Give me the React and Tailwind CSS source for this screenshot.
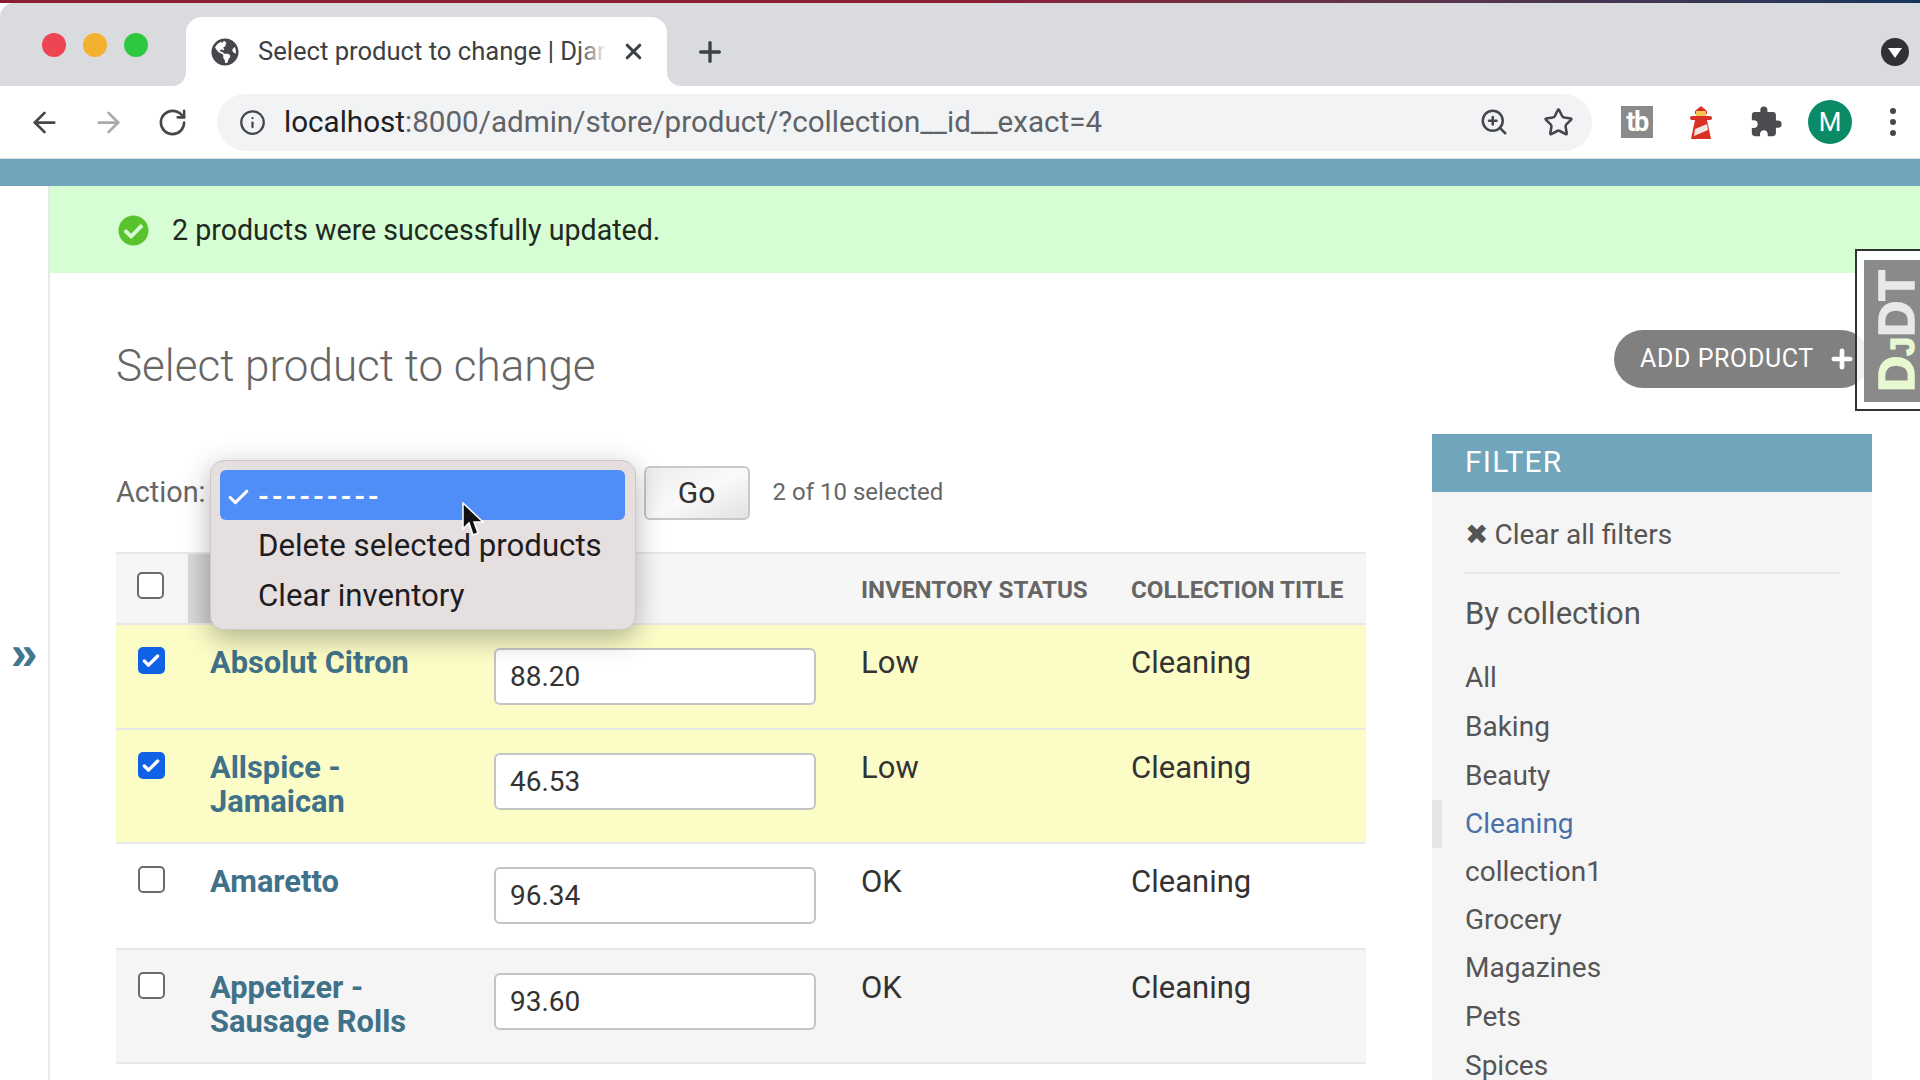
import React from 'react';
import { ArrowLeft, ArrowRight, RotateCw, Info, ZoomIn, Star, X, Plus, Check } from 'lucide-react';
import { FaGlobeAmericas, FaCheckCircle } from 'react-icons/fa';
import { MdExtension } from 'react-icons/md';

const rows = [
    { name: ['Absolut Citron'], price: '88.20', status: 'Low', checked: true, bg: 'bg-[#fbfcc6]', h: 'h-[105px]' },
    { name: ['Allspice -', 'Jamaican'], price: '46.53', status: 'Low', checked: true, bg: 'bg-[#fbfcc6]', h: 'h-[114px]' },
    { name: ['Amaretto'], price: '96.34', status: 'OK', checked: false, bg: 'bg-white', h: 'h-[106px]' },
    { name: ['Appetizer -', 'Sausage Rolls'], price: '93.60', status: 'OK', checked: false, bg: 'bg-[#f5f5f5]', h: 'h-[114px]' },
];

const filters = [
    ['All', 'h-[49px]'],
    ['Baking', 'h-[49px]'],
    ['Beauty', 'h-[49px]'],
    ['Cleaning', 'h-[48px]'],
    ['collection1', 'h-[48px]'],
    ['Grocery', 'h-[48px]'],
    ['Magazines', 'h-[48px]'],
    ['Pets', 'h-[49px]'],
    ['Spices', 'h-[49px]'],
];

const Checkbox = ({ checked }) => (
    checked ? (
        <div className="w-[27px] h-[27px] rounded-[5px] bg-[#0f62e6] flex items-center justify-center">
            <Check size={20} strokeWidth={4} className="text-white" />
        </div>
    ) : (
        <div className="w-[27px] h-[27px] rounded-[5px] border-2 border-[#6b6b6b] bg-white" />
    )
);

const Lighthouse = () => (
    <svg width="24" height="33" viewBox="0 0 24 33">
        <path d="M12 0 L18 5 L18 8 L6 8 L6 5 Z" fill="#d93025" />
        <rect x="7" y="5" width="10" height="6" fill="#f6c453" />
        <rect x="1" y="10" width="22" height="4" rx="2" fill="#d93025" />
        <path d="M6 14 H18 L22 33 H2 Z" fill="#d93025" />
        <path d="M6 23 L18 18 L19 24 L5 30 Z" fill="#f3e6e0" />
    </svg>
);

const Cursor = () => (
    <svg width="24" height="36" viewBox="0 0 24 36">
        <path d="M2 1 L2 27 L8 21 L12 33 L17 31 L13 20 L22 20 Z" fill="#111" stroke="#fff" strokeWidth="1.5" />
    </svg>
);

const App = () => {
    return (
        <div className="relative w-[1920px] h-[1080px] overflow-hidden bg-white font-['Roboto',sans-serif] text-[#333]">
            {/* window edge */}
            <div className="h-[3px] bg-gradient-to-r from-[#8c1d35] via-[#8c1d35] to-[#14365c]" />

            {/* tab strip */}
            <div className="flex h-[83px] items-end bg-[#d9dbdf] rounded-tl-[14px]">
                <div className="flex h-[83px] w-[186px] shrink-0 items-center gap-[17px] pl-[42px]">
                    <div className="w-[24px] h-[24px] rounded-full bg-[#ee4553]" />
                    <div className="w-[24px] h-[24px] rounded-full bg-[#f4b02f]" />
                    <div className="w-[24px] h-[24px] rounded-full bg-[#2dc83f]" />
                </div>
                <div className="relative flex h-[69px] w-[481px] shrink-0 items-center rounded-t-[16px] bg-white pl-[25px]">
                    {/* flared tab corners */}
                    <div className="absolute bottom-0 left-[-14px] h-[14px] w-[14px] bg-white">
                        <div className="h-full w-full rounded-br-[14px] bg-[#d9dbdf]" />
                    </div>
                    <div className="absolute bottom-0 right-[-14px] h-[14px] w-[14px] bg-white">
                        <div className="h-full w-full rounded-bl-[14px] bg-[#d9dbdf]" />
                    </div>
                    <FaGlobeAmericas size={28} className="shrink-0 text-[#45474b]" />
                    <div className="relative ml-[19px] w-[349px] overflow-hidden whitespace-nowrap text-[25.6px] text-[#3c4043]">
                        Select product to change | Django site admin
                        <div className="absolute inset-y-0 right-0 w-[30px] bg-gradient-to-r from-transparent to-white" />
                    </div>
                    <X size={25} strokeWidth={3} className="ml-[14px] shrink-0 text-[#3c4043]" />
                </div>
                <div className="flex h-[69px] flex-1 items-center pl-[27px] pr-[11px]">
                    <Plus size={32} strokeWidth={2.5} className="text-[#3c4043]" />
                    <div className="ml-auto flex h-[28px] w-[28px] items-center justify-center rounded-full bg-[#2f3136]">
                        <div className="mt-[3px] h-0 w-0 border-x-[7px] border-t-[10px] border-x-transparent border-t-white" />
                    </div>
                </div>
            </div>

            {/* toolbar */}
            <div className="flex h-[73px] items-center border-b border-[#e3e3e3] bg-white pl-[28px]">
                <ArrowLeft size={33} strokeWidth={2} className="text-[#45474b]" />
                <ArrowRight size={33} strokeWidth={2} className="ml-[31px] text-[#a9abae]" />
                <RotateCw size={31} strokeWidth={2} className="ml-[32px] text-[#45474b]" />
                <div className="ml-[29px] flex h-[57px] w-[1375px] items-center rounded-full bg-[#f1f3f4] pl-[22px]">
                    <Info size={27} strokeWidth={2} className="text-[#45474b]" />
                    <div className="ml-[18px] whitespace-nowrap text-[29.6px] text-[#5f6368]">
                        <span className="text-[#202124]">localhost</span>:8000/admin/store/product/?collection__id__exact=4
                    </div>
                    <ZoomIn size={30} strokeWidth={2} className="ml-auto text-[#45474b]" />
                    <Star size={31} strokeWidth={2} className="ml-[34px] mr-[18px] text-[#45474b]" />
                </div>
                <div className="ml-[29px] flex h-[32px] w-[32px] items-center justify-center bg-[#8a8a8a] text-[27px] leading-none font-bold tracking-[-1.5px] text-white">
                    tb
                </div>
                <div className="ml-[36px] flex w-[24px] justify-center">
                    <Lighthouse />
                </div>
                <MdExtension size={34} className="ml-[36px] text-[#4a4c50]" />
                <div className="ml-[25px] flex h-[44px] w-[44px] items-center justify-center rounded-full bg-[#0b8a66] text-[26px] text-white">
                    M
                </div>
                <div className="ml-[38px] flex flex-col gap-[5px]">
                    <div className="h-[6px] w-[6px] rounded-full bg-[#45474b]" />
                    <div className="h-[6px] w-[6px] rounded-full bg-[#45474b]" />
                    <div className="h-[6px] w-[6px] rounded-full bg-[#45474b]" />
                </div>
            </div>

            {/* django header strip */}
            <div className="h-[27px] bg-[#70a5bb]" />

            <div className="flex">
                {/* collapsed nav */}
                <div className="flex h-[894px] w-[50px] shrink-0 justify-center border-r-2 border-[#e8e8e8] pt-[439px]">
                    <span className="font-['Liberation_Sans',sans-serif] text-[48px] leading-[56px] font-bold text-[#417690]">»</span>
                </div>

                <div className="min-w-0 flex-1">
                    {/* message */}
                    <div className="flex h-[87px] items-center bg-[#d6fdd3] pl-[68px] pt-[1px] text-[28.6px] text-[#1f2a1f]">
                        <FaCheckCircle size={31} className="text-[#58c32c]" />
                        <span className="ml-[23px]">2 products were successfully updated.</span>
                    </div>

                    {/* title row */}
                    <div className="flex h-[161px] items-start pl-[66px] pr-[50px] pt-[57px]">
                        <h1 className="mt-[7px] text-[44px] leading-[58px] font-light text-[#666]">Select product to change</h1>
                        <div className="ml-auto flex h-[58px] w-[256px] items-center rounded-full bg-[#808080] pl-[26px] text-[25px] tracking-[0.6px] text-white">
                            ADD PRODUCT
                            <Plus size={28} strokeWidth={4} className="ml-[14px]" />
                        </div>
                    </div>

                    <div className="flex items-start pl-[66px]">
                        {/* changelist */}
                        <div className="w-[1250px] shrink-0">
                            <div className="flex h-[118px] items-start pt-[32px]">
                                <span className="mt-[8px] text-[28.8px] leading-[36px] text-[#666]">Action:</span>
                                <div className="ml-[438px] flex h-[54px] w-[106px] items-center justify-center rounded-[6px] border-2 border-[#c8c8c8] bg-gradient-to-br from-[#ececec] via-[#fafafa] to-[#e2e2e2] pb-[2px] text-[30px] text-[#333]">
                                    Go
                                </div>
                                <span className="ml-[23px] mt-[10px] text-[24px] leading-[32px] text-[#666]">2 of 10 selected</span>
                            </div>

                            {/* table head */}
                            <div className="flex h-[73px] border-y-2 border-[#e8e8e8] bg-[#f6f6f6]">
                                <div className="w-[72px] shrink-0 pl-[21px] pt-[18px]">
                                    <Checkbox checked={false} />
                                </div>
                                <div className="w-[673px] shrink-0 bg-gradient-to-r from-[#dadada] to-[#c8c8c8] [background-size:40px_100%] bg-no-repeat" />
                                <div className="w-[270px] shrink-0 pt-[18px] text-[24.2px] font-bold text-[#666]">INVENTORY STATUS</div>
                                <div className="pt-[18px] text-[24.2px] font-bold text-[#666] whitespace-nowrap">COLLECTION TITLE</div>
                            </div>

                            {/* rows */}
                            {rows.map((row) => (
                                <div key={row.price} className={`flex border-b-2 border-[#e8e8e8] ${row.bg} ${row.h}`}>
                                    <div className="flex w-[70px] shrink-0 justify-center pt-[22px]">
                                        <Checkbox checked={row.checked} />
                                    </div>
                                    <div className="w-[308px] shrink-0 pl-[24px] pt-[21px] text-[30.8px] leading-[34px] font-bold text-[#3f7189]">
                                        {row.name.map((line) => (
                                            <div key={line}>{line}</div>
                                        ))}
                                    </div>
                                    <div className="w-[367px] shrink-0 pt-[23px]">
                                        <input
                                            readOnly
                                            value={row.price}
                                            className="h-[57px] w-[322px] rounded-[6px] border-2 border-[#c4c4c4] bg-white px-[14px] text-[28px] text-[#333] outline-none"
                                        />
                                    </div>
                                    <div className="w-[270px] shrink-0 pt-[21px] text-[31px] leading-[34px] text-[#333]">{row.status}</div>
                                    <div className="pt-[21px] text-[31px] leading-[34px] text-[#333]">Cleaning</div>
                                </div>
                            ))}
                        </div>

                        {/* filter */}
                        <div className="ml-[66px] w-[440px] shrink-0">
                            <div className="flex h-[58px] items-center bg-[#70a5bb] pb-[4px] pl-[33px] text-[30px] tracking-[1.2px] text-white">
                                FILTER
                            </div>
                            <div className="h-[600px] bg-[#f5f5f5]">
                                <div className="mx-[33px] flex h-[82px] items-center border-b-2 border-[#e8e8e8] pt-[6px] text-[28px] text-[#555]">
                                    <span className="mr-[6px] font-['DejaVu_Sans',sans-serif] text-[28px]">✖</span>
                                    Clear all filters
                                </div>
                                <div className="flex h-[79px] items-center pl-[33px] pt-[1px] text-[31px] text-[#555]">By collection</div>
                                {filters.map(([label, h]) => (
                                    <div
                                        key={label}
                                        className={`flex items-center text-[28px] ${h} ${
                                            label === 'Cleaning'
                                                ? 'border-l-[10px] border-[#e6e6e6] pl-[23px] text-[#4d6fa8]'
                                                : 'pl-[33px] text-[#555]'
                                        }`}
                                    >
                                        {label}
                                    </div>
                                ))}
                            </div>
                        </div>
                    </div>
                </div>
            </div>

            {/* native select popup */}
            <div className="absolute left-[210px] top-[460px] h-[170px] w-[426px] rounded-[14px] border border-[#cfc8c8] bg-[#e6dfdf] p-[9px] pr-[10px] shadow-[0_8px_28px_rgba(0,0,0,0.3)]">
                <div className="relative mb-[1px] flex h-[50px] items-center rounded-[6px] bg-[#4f8df7] pl-[38px] pt-[3px] text-[28px] font-bold tracking-[2.7px] text-white">
                    <Check size={25} strokeWidth={3} className="absolute left-[6px] top-[15px]" />
                    ---------
                </div>
                <div className="flex h-[50px] items-center pl-[38px] text-[31.2px] text-[#1d1d1f]">Delete selected products</div>
                <div className="flex h-[50px] items-center pl-[38px] text-[31.2px] text-[#1d1d1f]">Clear inventory</div>
            </div>

            {/* cursor */}
            <div className="absolute left-[461px] top-[502px]">
                <Cursor />
            </div>

            {/* debug toolbar handle */}
            <div className="absolute left-[1855px] top-[249px] h-[162px] w-[65px] border-2 border-r-0 border-[#333] bg-white/90 pl-[7px] pt-[9px]">
                <div className="flex h-[142px] w-[58px] items-center justify-center overflow-hidden bg-[#8a8a8a] pl-[8px]">
                    <div className="-rotate-90 whitespace-nowrap font-['Liberation_Sans',sans-serif] text-[50px] leading-none font-bold text-[#e8e8e8] [-webkit-text-stroke:1.5px]">
                        <span className="text-[#e8f8d0]">D<span className="text-[34px]">J</span></span>DT
                    </div>
                </div>
            </div>
        </div>
    );
};

export default App;
